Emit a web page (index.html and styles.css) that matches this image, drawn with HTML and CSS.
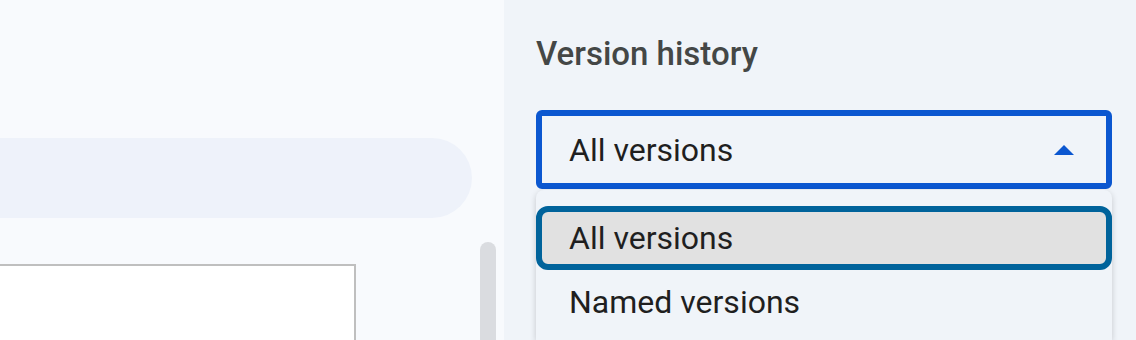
FILE: index.html
```html
<!DOCTYPE html>
<html lang="en">
<head>
    <meta charset="UTF-8">
    <meta name="viewport" content="width=device-width, initial-scale=1.0">
    <title>Version history</title>
    <link rel="stylesheet" href="styles.css">
</head>
<body>
    <!-- Document area -->
    <main class="doc">
        <div class="doc-content">
            <div class="toolbar-pill"></div>
            <div class="page"></div>
        </div>
        <div class="scroll-track">
            <div class="scroll-thumb"></div>
        </div>
    </main>

    <!-- Version history side panel -->
    <aside class="panel">
        <h2 class="panel-title">Version history</h2>
        <div class="select">
            <span class="select-value">All versions</span>
            <svg class="select-arrow" width="20" height="10" viewBox="0 0 20 10">
                <polygon points="0,10 10,0 20,10" fill="#0b57d0"/>
            </svg>
        </div>
        <ul class="menu">
            <li class="menu-item active">All versions</li>
            <li class="menu-item">Named versions</li>
        </ul>
    </aside>
</body>
</html>
```

FILE: styles.css
```css
html {
    height: 340px;
    overflow: hidden;
}
body {
    margin: 0;
    font-family: Roboto, "Noto Sans", Arial, sans-serif;
    display: flex;
    height: 340px;
    overflow: hidden;
    background-color: #f0f4f9;
}
.doc {
    width: 504px;
    flex: none;
    display: flex;
    background-color: #f8fafd;
}
.doc-content {
    flex: 1;
}
.toolbar-pill {
    margin-top: 138px;
    width: 472px;
    height: 80px;
    background-color: #eef2fa;
    border-radius: 0 40px 40px 0;
}
.page {
    margin-top: 46px;
    width: 354px;
    height: 76px;
    background-color: #fff;
    border: 2px solid #bfbfbf;
    border-left: none;
    border-bottom: none;
}
.scroll-track {
    width: 16px;
    margin-right: 8px;
    padding-top: 242px;
}
.scroll-thumb {
    height: 98px;
    background-color: #dadce0;
    border-radius: 8px 8px 0 0;
}
.panel {
    flex: 1;
    min-width: 0;
    padding: 0 24px 0 32px;
}
.panel-title {
    margin: 34px 0 36px;
    font-size: 33px;
    line-height: 40px;
    font-weight: 500;
    color: #444746;
}
.select {
    box-sizing: border-box;
    height: 79px;
    display: flex;
    align-items: center;
    justify-content: space-between;
    padding: 0 32px 0 27px;
    border: 6px solid #0b57d0;
    border-radius: 6px;
    font-size: 32px;
    line-height: 40px;
    color: #1f1f1f;
}
.select-arrow {
    display: block;
}
.menu {
    list-style: none;
    height: 150px;
    box-sizing: border-box;
    margin: 1px 0 0;
    padding: 16px 0 0;
    background-color: #f0f4f9;
    border-radius: 8px 8px 0 0;
    box-shadow: 0 2px 6px rgba(0, 0, 0, 0.18);
}
.menu-item {
    box-sizing: border-box;
    height: 64px;
    padding: 0 27px;
    border: 6px solid transparent;
    border-radius: 12px;
    font-size: 32px;
    line-height: 52px;
    color: #1f1f1f;
}
.menu-item.active {
    background-color: #e1e1e1;
    border-color: #00639b;
}
```
